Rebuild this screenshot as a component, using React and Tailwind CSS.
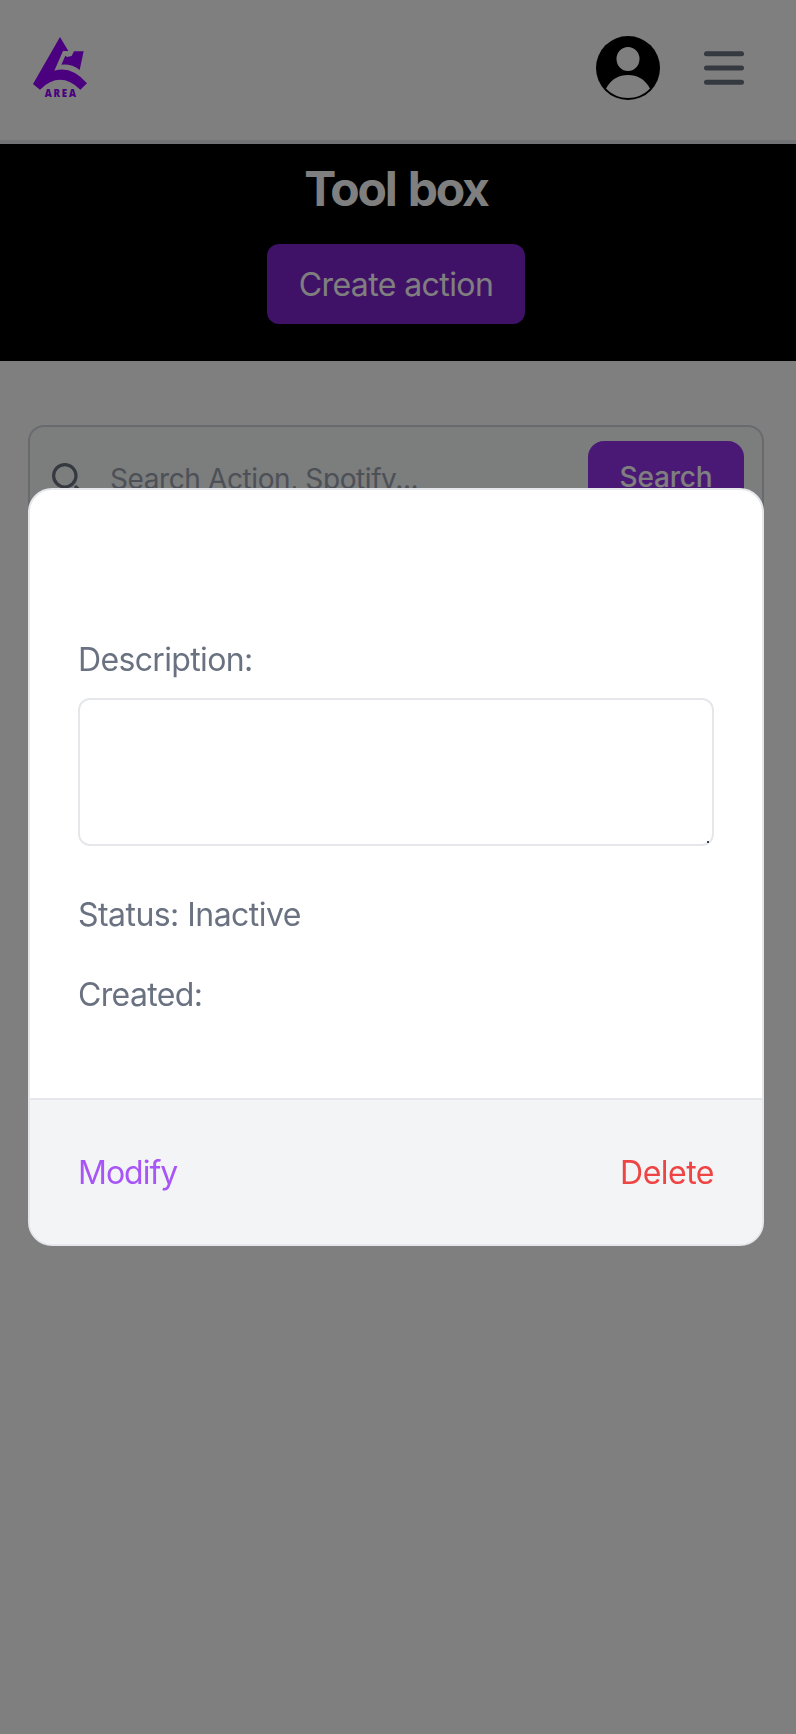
const font = "font-['Inter','Liberation_Sans',sans-serif]";

function Logo() {
  return (
    <svg width="80" height="85" viewBox="0 0 240 255" fill="#9600ff">
      <path d="M120 36L145 78H129L103 137Q155 122 201 175L181 194Q120 135 60 194L39 177Z" />
      <path d="M162 79H191L179 135Q155 116 124 119L136 92L141 96L155 93Z" />
      <text x="74" y="216" fontSize="29" fontWeight="800" fontFamily="'Open Sans', sans-serif" textLength="94">AREA</text>
    </svg>
  );
}

function Header() {
  return (
    <header className="flex h-36 items-start justify-between border-b-4 border-gray-200 pl-5 pr-[52px]">
      <div className="pt-[25px]"><Logo /></div>
      <div className="flex items-center gap-11 pt-9">
        <svg width="64" height="64" viewBox="0 0 64 64">
          <circle cx="32" cy="32" r="32" fill="#000" />
          <ellipse cx="32" cy="23" rx="11.5" ry="12" fill="#fff" />
          <path d="M10 52.5C15 43 23 39 32 39S49 43 54 52.5C48 59 40 62 32 62S16 59 10 52.5Z" fill="#fff" />
        </svg>
        <svg width="40" height="40" viewBox="0 0 40 40" stroke="#6b7280" strokeWidth="5" strokeLinecap="round">
          <path d="M2.5 5.7H37.5M2.5 20H37.5M2.5 34.2H37.5" />
        </svg>
      </div>
    </header>
  );
}

function Hero() {
  return (
    <section className="flex h-[217px] flex-col items-center bg-black pt-[19px] pr-1 text-white">
      <h1 className="text-5xl leading-[52px] font-bold tracking-[-2.2px] [word-spacing:3px]">Tool box</h1>
      <button className="mt-[29px] h-20 w-[258px] rounded-xl bg-[#7e22ce] pt-0.5 text-[32px] tracking-[-0.6px]">Create action</button>
    </section>
  );
}

function SearchBar() {
  return (
    <div className="mx-7 mr-8 mt-16 flex h-27 items-center rounded-2xl border-2 border-gray-300 bg-gray-50 pr-[18px] pl-[22px]">
      <svg width="32" height="32" viewBox="0 0 20 20" fill="none" stroke="#6b7280" strokeWidth="2" strokeLinecap="round" strokeLinejoin="round">
        <path d="m19 19-4-4m0-7A7 7 0 1 1 1 8a7 7 0 0 1 14 0Z" />
      </svg>
      <span className="ml-[26px] flex-1 text-[28px] tracking-[-0.4px] text-gray-400">Search Action, Spotify...</span>
      <button className="mb-1 h-18 w-39 rounded-2xl bg-[#9333ea] text-[28px] font-medium tracking-[-0.2px] text-white">Search</button>
    </div>
  );
}

function ActionModal() {
  return (
    <div className="fixed inset-0 flex items-start bg-black/50 pt-[488px] pr-8 pl-7">
      <div className="h-[758px] w-full overflow-hidden rounded-3xl border-2 border-gray-200 bg-white text-[32px] leading-12 text-gray-500">
        <div className="flex h-[608px] flex-col px-12 pt-[146px]">
          <label className="tracking-[-0.65px]">Description:</label>
          <textarea className="mt-[14px] block h-[148px] w-full shrink-0 resize-none rounded-xl border-2 border-gray-200" />
          <span className="relative -top-[5px] left-[629px] size-0.5 bg-gray-700" />
          <p className="mt-[43px] tracking-[-0.55px]">Status: Inactive</p>
          <p className="mt-8 tracking-[-0.65px]">Created:</p>
        </div>
        <div className="flex h-[146px] items-center justify-between border-t-2 border-gray-200 bg-gray-100 px-12 pt-0.5">
          <button className="text-[#a855f7] tracking-[-1px]">Modify</button>
          <button className="text-[#ef4444] tracking-[-0.5px]">Delete</button>
        </div>
      </div>
    </div>
  );
}

export default function App() {
  return (
    <main className={`min-h-screen bg-white ${font}`}>
      <Header />
      <Hero />
      <SearchBar />
      <ActionModal />
    </main>
  );
}
